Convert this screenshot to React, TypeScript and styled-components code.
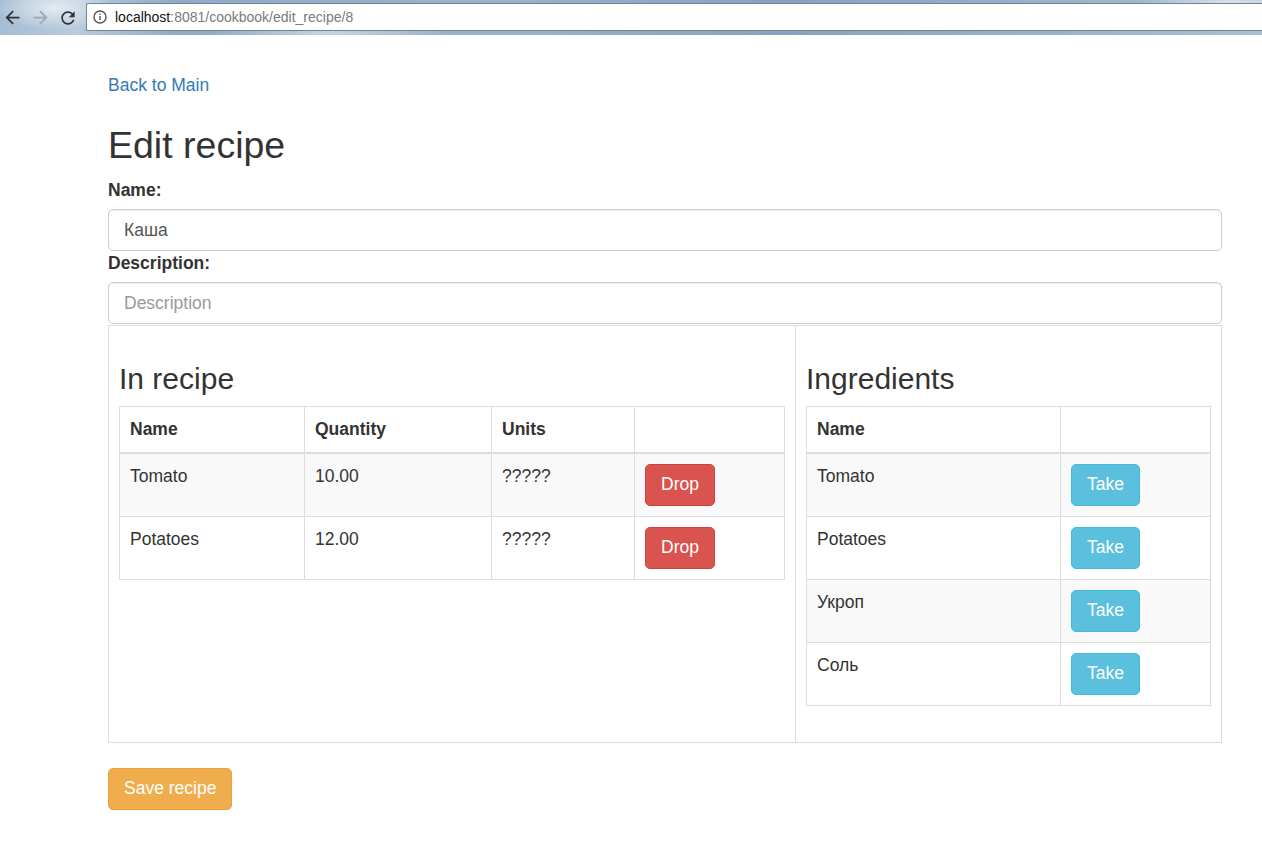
import React from 'react';
import styled, { createGlobalStyle } from 'styled-components';

const Global = createGlobalStyle`
  html, body { margin: 0; padding: 0; background: #fff; }
  body {
    font-family: "Liberation Sans", Arial, Helvetica, sans-serif;
    font-size: 17.5px;
    line-height: 25px;
    color: #333;
  }
  * { box-sizing: border-box; }
`;

/* ---------- browser chrome ---------- */
const BrowserBar = styled.div`
  height: 35px;
  display: flex;
  align-items: flex-start;
  padding-left: 1px;
  background:
    radial-gradient(ellipse 60px 22px at 55px 8px, rgba(235, 240, 246, 0.85), rgba(235, 240, 246, 0) 100%),
    radial-gradient(ellipse 90px 14px at 1230px 4px, rgba(240, 236, 238, 0.8), rgba(240, 236, 238, 0) 100%),
    radial-gradient(ellipse 120px 10px at 330px 33px, rgba(225, 228, 236, 0.7), rgba(225, 228, 236, 0) 100%),
    linear-gradient(90deg, #a6bdd3 0%, #b9cbdc 6%, #8fabc7 14%, #9ab3cc 40%, #86a2c0 62%, #95b0ca 80%, #a9bfd3 100%);
`;

const NavGroup = styled.div`
  display: flex;
  gap: 6px;
  height: 35px;
  align-items: center;
`;

const NavButton = styled.div<{ $disabled?: boolean }>`
  width: 22px;
  height: 22px;
  display: flex;
  align-items: center;
  justify-content: center;
  color: ${(p) => (p.$disabled ? '#9aa8b6' : '#333')};
`;

const AddressBar = styled.div`
  flex: 1;
  height: 28px;
  margin: 3px 0 0 7px;
  background: #fff;
  border: 1px solid #6f8396;
  border-right: none;
  border-radius: 2px 0 0 2px;
  display: flex;
  align-items: center;
  padding-left: 6px;
  gap: 8px;
  font-family: "Liberation Sans", Arial, sans-serif;
  font-size: 14px;
  line-height: 16px;
`;

const Host = styled.span`
  color: #111;
`;

const UrlRest = styled.span`
  color: #7a7a7a;
`;

/* ---------- page ---------- */
const Page = styled.div`
  padding: 38px 0 40px 108px;
`;

const Container = styled.div`
  width: 1114px;
`;

const BackLink = styled.a`
  display: block;
  color: #337ab7;
  text-decoration: none;
`;

const Title = styled.h1`
  font-size: 37.5px;
  font-weight: 400;
  line-height: 42px;
  margin: 26px 0 12px;
  color: #333;
`;

const FieldLabel = styled.label`
  display: block;
  font-weight: bold;
  margin-bottom: 6px;
`;

const TextInput = styled.input`
  display: block;
  width: 100%;
  height: 42px;
  padding: 7.5px 15px;
  font-family: inherit;
  font-size: 17.5px;
  line-height: 25px;
  color: #555;
  background: #fff;
  border: 1px solid #ccc;
  border-radius: 5px;
  box-shadow: inset 0 1px 1px rgba(0, 0, 0, 0.075);
  outline: none;
  &::placeholder { color: #999; }
`;

const Panel = styled.div`
  display: flex;
  border: 1px solid #ddd;
  margin-top: 1px;
`;

const Column = styled.div<{ $width?: number; $divider?: boolean }>`
  ${(p) => (p.$width ? `width: ${p.$width}px;` : 'flex: 1;')}
  padding: 10px 10px 11px;
  ${(p) => (p.$divider ? 'border-right: 1px solid #ddd;' : '')}
`;

const SectionTitle = styled.h3`
  font-size: 30px;
  font-weight: 400;
  line-height: 33px;
  margin: 26px 0 10.5px;
  color: #333;
`;

const Table = styled.table`
  width: 100%;
  border-collapse: collapse;
  border: 1px solid #ddd;
  margin-bottom: 25px;
`;

const HeadCell = styled.th<{ $w?: number }>`
  ${(p) => (p.$w ? `width: ${p.$w}px;` : '')}
  text-align: left;
  vertical-align: bottom;
  padding: 10px;
  border: 1px solid #ddd;
  border-bottom: 2px solid #ddd;
  font-weight: bold;
  line-height: 25px;
`;

const Row = styled.tr`
  &:nth-of-type(odd) { background: #f9f9f9; }
`;

const Cell = styled.td`
  padding: 10px;
  border: 1px solid #ddd;
  vertical-align: top;
  line-height: 25px;
`;

const Button = styled.button<{ $variant: 'danger' | 'info' | 'warning' }>`
  display: inline-block;
  height: 42px;
  padding: 7.5px 15px;
  font-family: inherit;
  font-size: 17.5px;
  line-height: 25px;
  color: #fff;
  border-radius: 5px;
  border: 1px solid
    ${(p) => (p.$variant === 'danger' ? '#d43f3a' : p.$variant === 'info' ? '#46b8da' : '#eea236')};
  background: ${(p) => (p.$variant === 'danger' ? '#d9534f' : p.$variant === 'info' ? '#5bc0de' : '#f0ad4e')};
  cursor: pointer;
`;

const SaveButton = styled(Button)`
  margin-top: 25px;
`;

const recipeRows = [
  { name: 'Tomato', qty: '10.00', units: '?????' },
  { name: 'Potatoes', qty: '12.00', units: '?????' },
];

const ingredients = ['Tomato', 'Potatoes', 'Укроп', 'Соль'];

const BackIcon = () => (
  <svg width="21" height="21" viewBox="0 0 24 24" fill="currentColor">
    <path d="M20 11H7.83l5.59-5.59L12 4l-8 8 8 8 1.41-1.41L7.83 13H20v-2z" />
  </svg>
);

const ForwardIcon = () => (
  <svg width="21" height="21" viewBox="0 0 24 24" fill="currentColor">
    <path d="M12 4l-1.41 1.41L16.17 11H4v2h12.17l-5.58 5.59L12 20l8-8z" />
  </svg>
);

const ReloadIcon = () => (
  <svg width="20" height="20" viewBox="0 0 24 24" fill="currentColor">
    <path d="M17.65 6.35C16.2 4.9 14.21 4 12 4c-4.42 0-7.99 3.58-7.99 8s3.57 8 7.99 8c3.73 0 6.84-2.55 7.73-6h-2.08c-.82 2.33-3.04 4-5.65 4-3.31 0-6-2.69-6-6s2.69-6 6-6c1.66 0 3.14.69 4.22 1.78L13 11h7V4l-2.35 2.35z" />
  </svg>
);

const InfoIcon = () => (
  <svg width="14" height="14" viewBox="0 0 14 14">
    <circle cx="7" cy="7" r="6" fill="none" stroke="#555" strokeWidth="1.4" />
    <rect x="6.3" y="6" width="1.4" height="4.2" fill="#555" />
    <rect x="6.3" y="3.6" width="1.4" height="1.4" fill="#555" />
  </svg>
);

export default function App() {
  return (
    <>
      <Global />
      <BrowserBar>
        <NavGroup>
          <NavButton><BackIcon /></NavButton>
          <NavButton $disabled><ForwardIcon /></NavButton>
          <NavButton><ReloadIcon /></NavButton>
        </NavGroup>
        <AddressBar>
          <InfoIcon />
          <span>
            <Host>localhost</Host>
            <UrlRest>:8081/cookbook/edit_recipe/8</UrlRest>
          </span>
        </AddressBar>
      </BrowserBar>
      <Page>
        <Container>
          <BackLink href="#">Back to Main</BackLink>
          <Title>Edit recipe</Title>
          <FieldLabel>Name:</FieldLabel>
          <TextInput defaultValue="Каша" />
          <FieldLabel>Description:</FieldLabel>
          <TextInput placeholder="Description" />
          <Panel>
            <Column $width={687} $divider>
              <SectionTitle>In recipe</SectionTitle>
              <Table>
                <thead>
                  <tr>
                    <HeadCell $w={185}>Name</HeadCell>
                    <HeadCell $w={187}>Quantity</HeadCell>
                    <HeadCell $w={143}>Units</HeadCell>
                    <HeadCell />
                  </tr>
                </thead>
                <tbody>
                  {recipeRows.map((r) => (
                    <Row key={r.name}>
                      <Cell>{r.name}</Cell>
                      <Cell>{r.qty}</Cell>
                      <Cell>{r.units}</Cell>
                      <Cell><Button $variant="danger">Drop</Button></Cell>
                    </Row>
                  ))}
                </tbody>
              </Table>
            </Column>
            <Column>
              <SectionTitle>Ingredients</SectionTitle>
              <Table>
                <thead>
                  <tr>
                    <HeadCell $w={254}>Name</HeadCell>
                    <HeadCell />
                  </tr>
                </thead>
                <tbody>
                  {ingredients.map((n) => (
                    <Row key={n}>
                      <Cell>{n}</Cell>
                      <Cell><Button $variant="info">Take</Button></Cell>
                    </Row>
                  ))}
                </tbody>
              </Table>
            </Column>
          </Panel>
          <SaveButton $variant="warning">Save recipe</SaveButton>
        </Container>
      </Page>
    </>
  );
}
